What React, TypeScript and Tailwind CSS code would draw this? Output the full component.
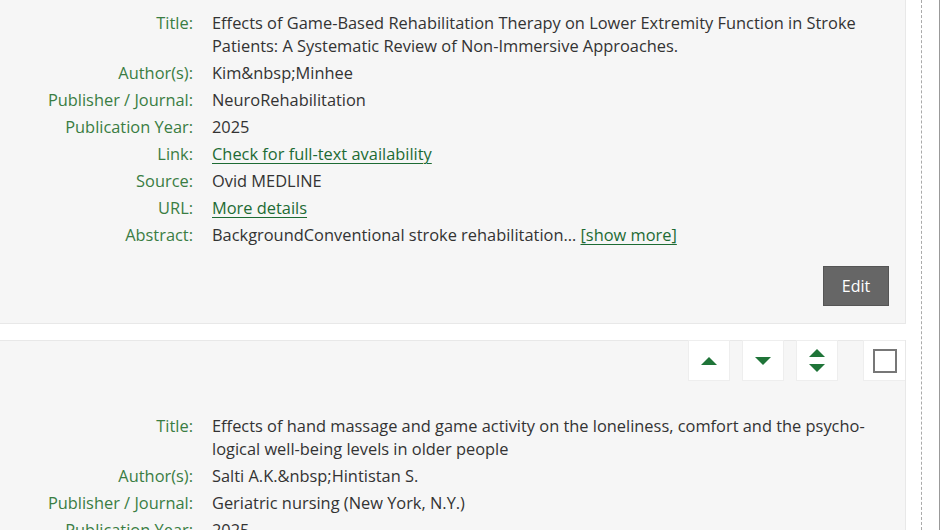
import type { ReactNode } from 'react'

type Row = { label: string; value: ReactNode }

const linkCls = 'text-[#1d6b34] underline underline-offset-[3px] decoration-1'

const first: Row[] = [
  {
    label: 'Title:',
    value:
      'Effects of Game-Based Rehabilitation Therapy on Lower Extremity Function in Stroke Patients: A Systematic Review of Non-Immersive Approaches.',
  },
  { label: 'Author(s):', value: 'Kim&nbsp;Minhee' },
  { label: 'Publisher / Journal:', value: 'NeuroRehabilitation' },
  { label: 'Publication Year:', value: '2025' },
  { label: 'Link:', value: <a className={linkCls} href="#">Check for full-text availability</a> },
  { label: 'Source:', value: 'Ovid MEDLINE' },
  { label: 'URL:', value: <a className={linkCls} href="#">More details</a> },
  {
    label: 'Abstract:',
    value: (
      <>
        BackgroundConventional stroke rehabilitation…{' '}
        <a className={linkCls} href="#">[show more]</a>
      </>
    ),
  },
]

const second: Row[] = [
  {
    label: 'Title:',
    value:
      'Effects of hand massage and game activity on the loneliness, comfort and the psycho\u00ADlogical well-being levels in older people',
  },
  { label: 'Author(s):', value: 'Salti A.K.&nbsp;Hintistan S.' },
  { label: 'Publisher / Journal:', value: 'Geriatric nursing (New York, N.Y.)' },
  { label: 'Publication Year:', value: '2025' },
]

function Fields({ rows, condensed }: { rows: Row[]; condensed?: boolean }) {
  return (
    <div className="grid grid-cols-[193px_1fr] gap-x-[19px] gap-y-1 pr-4 text-[16.4px] leading-[23px]">
      {rows.map((r) => (
        <div key={r.label} className="contents">
          <div className="text-right text-[#3a7d43]">{r.label}</div>
          <div className={condensed ? 'text-[#333] [font-stretch:94%]' : 'text-[#333]'}>
            {r.value}
          </div>
        </div>
      ))}
    </div>
  )
}

function Tile({ children }: { children: ReactNode }) {
  return (
    <button className="w-[42px] h-[41px] bg-white border border-[#eee] flex items-center justify-center">
      {children}
    </button>
  )
}

export default function App() {
  return (
    <div className="h-[530px] bg-white flex font-['Open_Sans',sans-serif] overflow-hidden">
      <div className="w-[906px] shrink-0">
        <div className="bg-[#f6f6f6] border-b border-r border-[#e8e8e8] pt-[11px] pb-[17px]">
          <Fields rows={first} condensed />
          <div className="flex justify-end pr-4 mt-5">
            <button className="w-[66px] h-[40px] bg-[#666] border border-[#555] text-white text-base">
              Edit
            </button>
          </div>
        </div>

        <div className="mt-4 bg-[#f6f6f6] border-t border-r border-[#e8e8e8]">
          <div className="flex justify-end h-[41px] -mt-px">
            <div className="flex gap-3 mr-[25px]">
              <Tile>
                <svg width="16" height="8" viewBox="0 0 16 8"><path d="M0 8 L8 0 L16 8 Z" fill="#1f7438" /></svg>
              </Tile>
              <Tile>
                <svg width="16" height="8" viewBox="0 0 16 8"><path d="M0 0 L16 0 L8 8 Z" fill="#1f7438" /></svg>
              </Tile>
              <Tile>
                <svg width="16" height="24" viewBox="0 0 16 24">
                  <path d="M0 8 L8 0 L16 8 Z" fill="#1f7438" />
                  <path d="M0 15 L16 15 L8 23 Z" fill="#1f7438" />
                </svg>
              </Tile>
            </div>
            <div className="w-[42px] h-[41px] bg-white border border-r-0 border-[#eee] flex items-center justify-center">
              <div className="w-6 h-6 border-2 border-[#777] bg-white" />
            </div>
          </div>
          <div className="pt-[33px] pb-4">
            <Fields rows={second} />
          </div>
        </div>
      </div>
      <div className="w-[34px] flex">
        <div className="ml-[15px] w-0 border-l border-dashed border-[#aaa]" />
        <div className="ml-auto w-px bg-[#999]" />
      </div>
    </div>
  )
}
